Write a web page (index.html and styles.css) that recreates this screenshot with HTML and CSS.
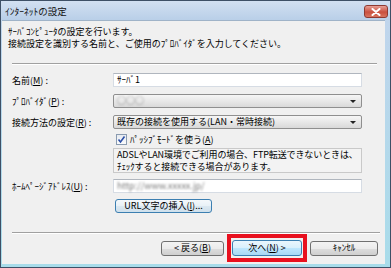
FILE: index.html
```html
<!DOCTYPE html>
<html lang="ja">
<head>
    <meta charset="UTF-8">
    <title>ｲﾝﾀｰﾈｯﾄの設定</title>
    <link rel="stylesheet" href="styles.css">
</head>
<body>
    <div class="window">
        <div class="titlebar">
            <span class="title">ｲﾝﾀｰﾈｯﾄの設定</span>
            <span class="close">
                <svg width="10" height="8" viewBox="0 0 10 8">
                    <path d="M1.5 1 L8.5 7 M8.5 1 L1.5 7" stroke="#fff" stroke-width="2" stroke-linecap="round"/>
                </svg>
            </span>
        </div>
        <div class="frame">
            <div class="client">
                <div class="intro">
                    <p>ｻｰﾊﾞｺﾝﾋﾟｭｰﾀの設定を行います。</p>
                    <p>接続設定を識別する名前と、ご使用のﾌﾟﾛﾊﾞｲﾀﾞを入力してください。</p>
                </div>
                <div class="sep"></div>

                <div class="form">
                    <div class="row">
                        <label class="lbl">名前(<u>M</u>) :</label>
                        <div class="input">ｻｰﾊﾞ1</div>
                    </div>
                    <div class="row gap7">
                        <label class="lbl">ﾌﾟﾛﾊﾞｲﾀﾞ(<u>P</u>) :</label>
                        <div class="select"><span class="blur">○○○</span><span class="arrow"></span></div>
                    </div>
                    <div class="row gap7">
                        <label class="lbl">接続方法の設定(<u>R</u>) :</label>
                        <div class="select"><span>既存の接続を使用する(LAN・常時接続)</span><span class="arrow"></span></div>
                    </div>
                    <div class="row check-row">
                        <span class="lbl"></span>
                        <div class="check">
                            <span class="box">
                                <svg width="9" height="9" viewBox="0 0 9 9">
                                    <path d="M1.5 4.5 L3.5 7 L7.5 1.5" fill="none" stroke="#2b4fa8" stroke-width="1.6"/>
                                </svg>
                            </span>
                            <span>ﾊﾟｯｼﾌﾞﾓｰﾄﾞを使う(<u>A</u>)</span>
                        </div>
                    </div>
                    <div class="row info-row">
                        <span class="lbl"></span>
                        <div class="info">
                            <p>ADSLやLAN環境でご利用の場合、FTP転送できないときは、</p>
                            <p>ﾁｪｯｸすると接続できる場合があります。</p>
                        </div>
                    </div>
                    <div class="row gap6">
                        <label class="lbl">ﾎｰﾑﾍﾟｰｼﾞｱﾄﾞﾚｽ(<u>U</u>) :</label>
                        <div class="input"><span class="blur">http://www.xxxxx.jp/</span></div>
                    </div>
                    <div class="row url-row">
                        <span class="lbl"></span>
                        <button class="btn btn-url">URL文字の挿入(<u>I</u>)...</button>
                    </div>
                </div>

                <div class="sep sep-bottom"></div>
                <div class="actions">
                    <button class="btn btn-back">&lt; 戻る(<u>B</u>)</button>
                    <span class="mark">
                        <button class="btn btn-next">次へ(<u>N</u>) &gt;</button>
                    </span>
                    <button class="btn btn-cancel">ｷｬﾝｾﾙ</button>
                </div>
            </div>
        </div>
    </div>
</body>
</html>
```

FILE: styles.css
```css
* {
    box-sizing: border-box;
}
body {
    margin: 0;
    font-family: "Noto Sans CJK JP", "Liberation Sans", sans-serif;
    font-size: 9px;
    color: #000;
}
p {
    margin: 0;
    white-space: nowrap;
}
u {
    text-decoration: underline;
    text-underline-offset: 1px;
}
.window {
    width: 391px;
    height: 268px;
    border: 1px solid #3e5066;
    background: linear-gradient(#c4d7ee, #b4d6ea);
}
.titlebar {
    height: 19px;
    display: flex;
    align-items: center;
    justify-content: space-between;
    padding: 0 2px 0 4px;
    background: linear-gradient(#d2e0f1, #b9cfe8);
}
.title {
    font-size: 9.5px;
    color: #111;
}
.close {
    width: 24px;
    height: 13px;
    margin-top: 2px;
    display: flex;
    align-items: center;
    justify-content: center;
    border: 1px solid #8e3a32;
    border-radius: 3px;
    background: linear-gradient(#e8a096, #c9503f 55%, #d8745f);
}
.frame {
    padding: 0 5px 3px 1px;
    background: linear-gradient(to bottom, #c0d5ec, #a8dcea);
}
.client {
    height: 244px;
    background: #f0f0f0;
    border-top: 1px solid #9fb3c8;
}
.intro {
    padding: 5px 0 0 6px;
    line-height: 11.5px;
}
.sep {
    height: 2px;
    margin: 14px 8px 0 10px;
    border-top: 1px solid #a0a0a0;
    border-bottom: 1px solid #fff;
}
.form {
    padding: 8px 0 0 10px;
}
.row {
    display: flex;
    align-items: center;
    white-space: nowrap;
}
.gap7 {
    margin-top: 7px;
}
.gap6 {
    margin-top: 6px;
}
.lbl {
    width: 101px;
    flex: none;
}
.input {
    width: 249px;
    height: 14px;
    line-height: 12px;
    padding-left: 3px;
    background: #fff;
    border: 1px solid #d6dce4;
    border-top-color: #b0b6be;
}
.select {
    position: relative;
    width: 249px;
    height: 14px;
    line-height: 12px;
    padding-left: 3px;
    border: 1px solid #8f8f8f;
    border-radius: 2px;
    background: linear-gradient(#f6f6f6, #e8e8e8 50%, #d9d9d9);
}
.arrow {
    position: absolute;
    right: 5px;
    top: 5px;
    border-left: 3px solid transparent;
    border-right: 3px solid transparent;
    border-top: 3px solid #222;
}
.blur {
    color: #7a7a7a;
    filter: blur(1.2px);
}
.check-row {
    margin-top: 4px;
    height: 12px;
}
.check {
    display: flex;
    align-items: center;
    gap: 3px;
    padding-left: 3px;
}
.box {
    width: 11px;
    height: 11px;
    display: flex;
    align-items: center;
    justify-content: center;
    border: 1px solid #8a9bb0;
    background: linear-gradient(#e6eaf0, #fafbfc);
}
.info-row {
    margin-top: 3px;
}
.info {
    width: 249px;
    height: 25px;
    padding: 0 3px;
    line-height: 11.5px;
    letter-spacing: -0.1px;
    border: 1px solid #c9c9c9;
    background: #f3f3f3;
}
.url-row {
    margin-top: 6px;
}
.btn {
    font-family: inherit;
    font-size: 9px;
    height: 15px;
    padding: 0;
    line-height: 12px;
    color: #000;
    border: 1px solid #707070;
    border-radius: 3px;
    background: linear-gradient(#f3f3f3, #ebebeb 50%, #dddddd 51%, #cfcfcf);
}
.btn-url {
    width: 97px;
    height: 14px;
    margin-left: 2px;
    border-color: #3c7fb1;
    background: linear-gradient(#f4f8fb, #e8f1f7 50%, #dbe8f1 51%, #cfe0ec);
}
.sep-bottom {
    margin-top: 19px;
    margin-right: 5px;
}
.actions {
    height: 28px;
    display: flex;
    align-items: center;
    justify-content: flex-end;
    gap: 3px;
    padding-right: 7px;
}
.btn-back {
    width: 63px;
}
.btn-cancel {
    width: 68px;
}
.mark {
    display: flex;
    align-items: center;
    justify-content: center;
    width: 80px;
    height: 28px;
    border: 4px solid #e8101e;
}
.btn-next {
    width: 70px;
    height: 16px;
    border-color: #3c7fb1;
    background: linear-gradient(#eaf6fd, #d9f0fc 50%, #bee6fd 51%, #a7d9f5);
}
```
